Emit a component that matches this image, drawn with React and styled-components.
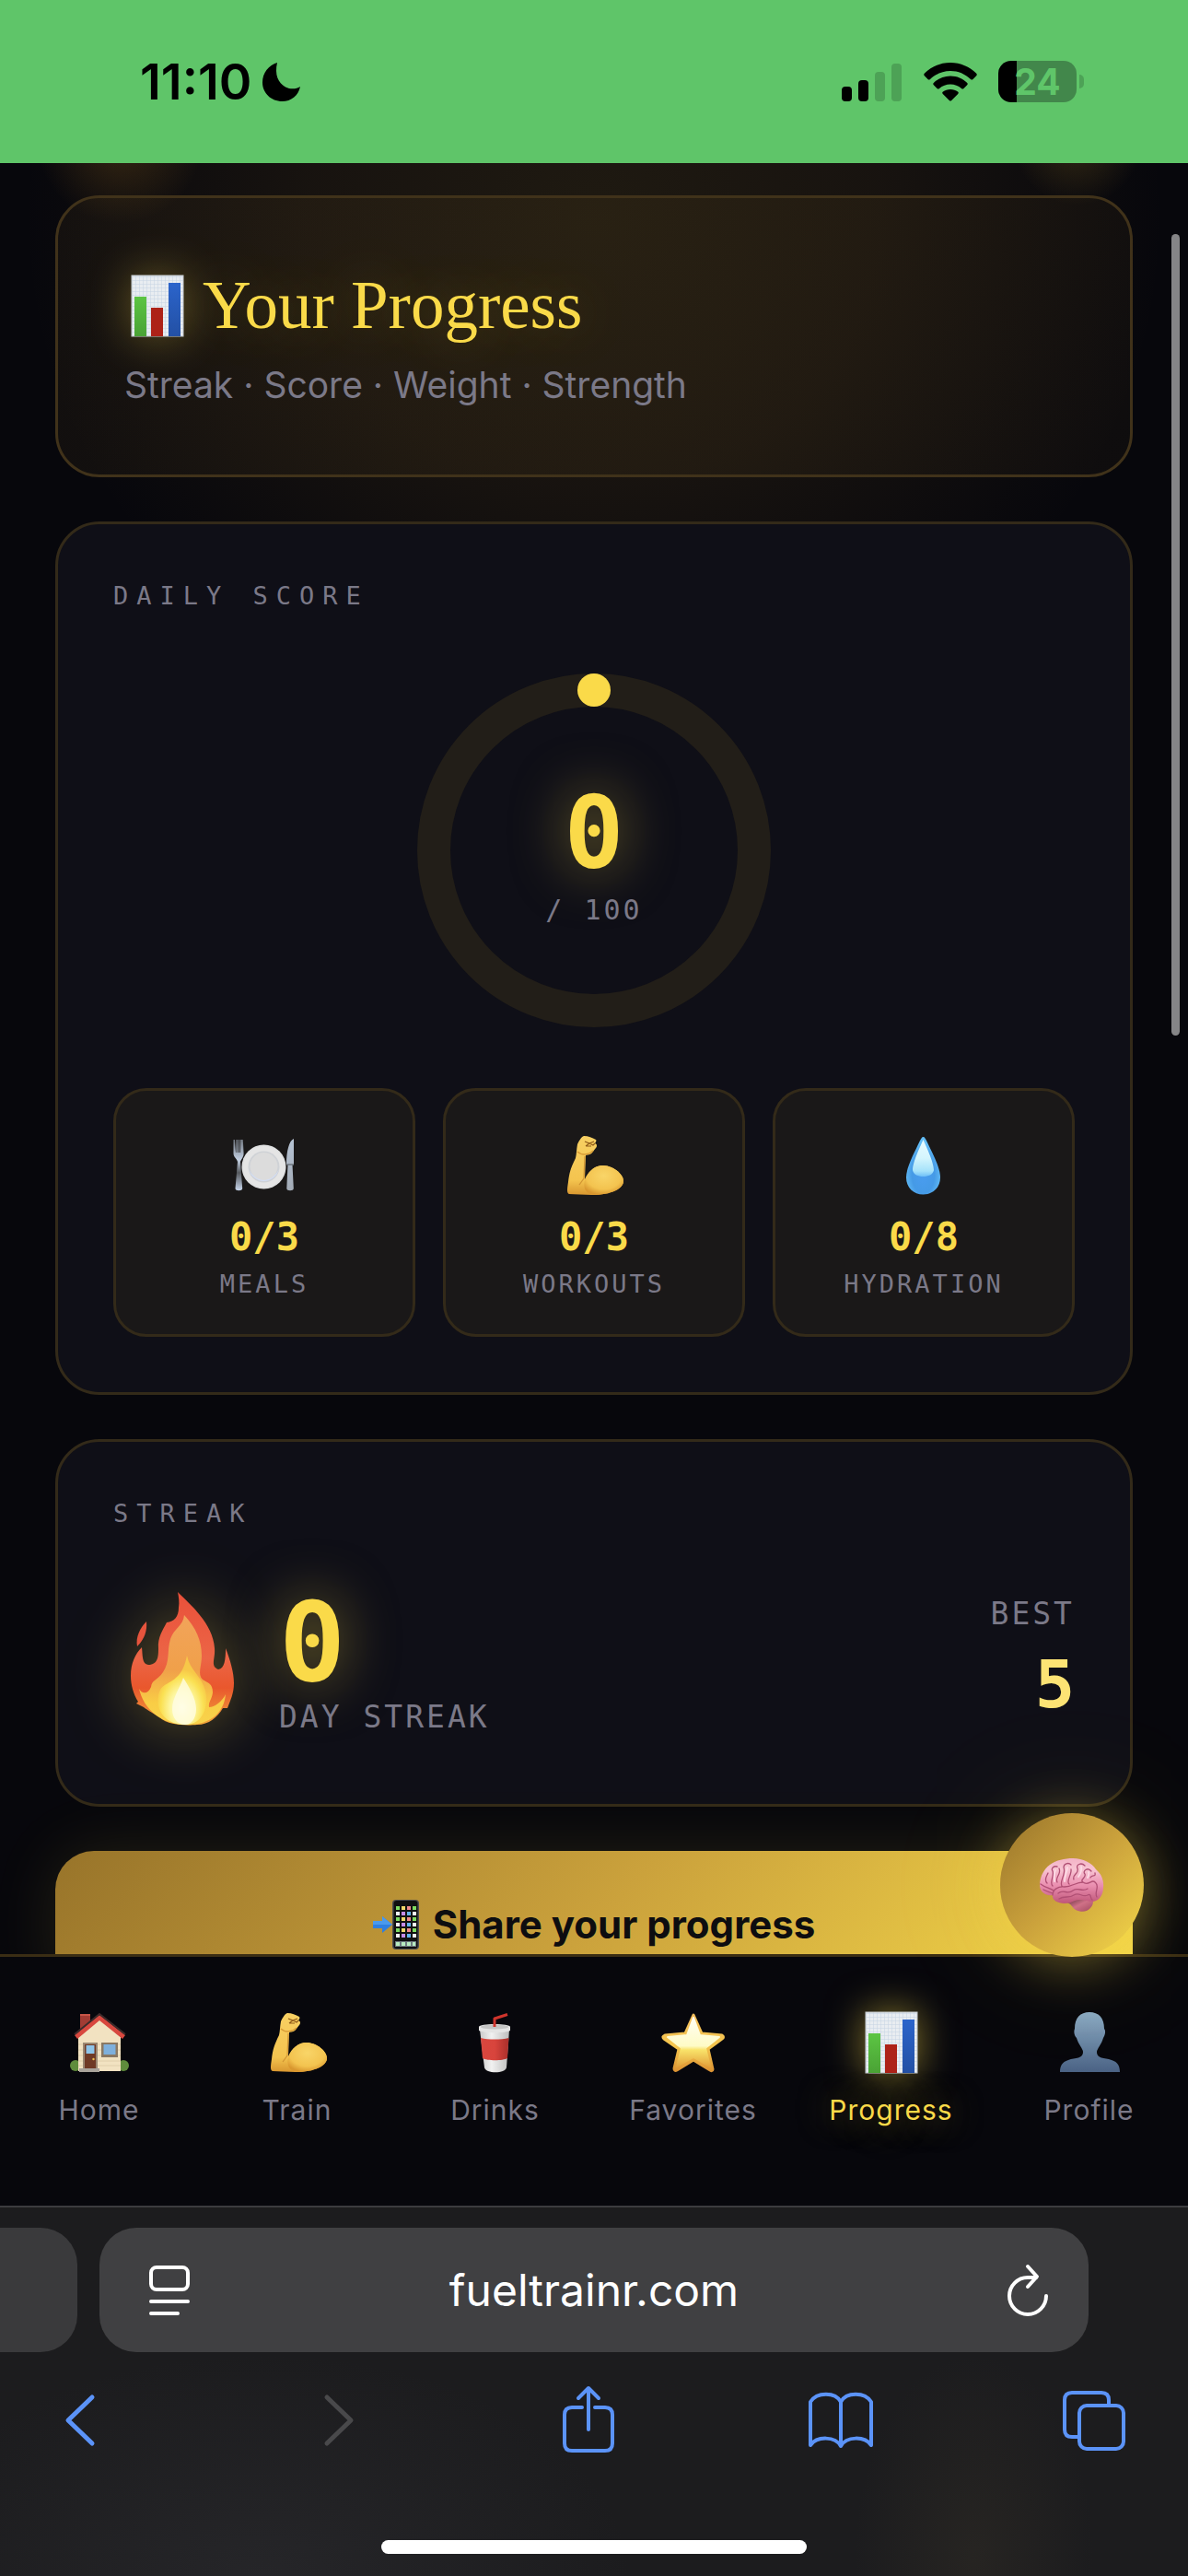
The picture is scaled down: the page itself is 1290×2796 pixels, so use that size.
import React from 'react';
import styled, { createGlobalStyle, ThemeProvider, css } from 'styled-components';

const theme = {
  colors: {
    page: '#07070c',
    card: '#0f0f17',
    tile: '#1a1818',
    border: '#332a19',
    gold: '#fada49',
    paleGold: '#fce374',
    muted: '#7b7988',
    track: '#221e18',
    status: '#5fc569',
    browser: '#1c1c1e',
    field: '#404042',
    link: '#5b93f8',
    disabled: '#49494b',
  },
  fonts: {
    sans: 'Inter, "Liberation Sans", sans-serif',
    serif: '"Liberation Serif", serif',
    mono: '"DejaVu Sans Mono", monospace',
  },
  gradients: {
    gold: 'linear-gradient(135deg, #98742a 0%, #cba23c 50%, #f5d94a 100%)',
  },
};

const GlobalStyle = createGlobalStyle`
  *, *::before, *::after {
    box-sizing: border-box;
  }

  body {
    margin: 0;
    background: ${theme.colors.page};
    font-family: ${theme.fonts.sans};
  }

  h1, h2, p {
    margin: 0;
    font-weight: 400;
  }

  button, input {
    font: inherit;
    border: none;
    padding: 0;
    background: none;
  }

  svg {
    display: block;
    flex: none;
  }
`;

const Screen = styled.div`
  display: flex;
  flex-direction: column;
  height: 100vh;
  overflow: hidden;
`;

/* ---------- status bar ---------- */

const StatusBar = styled.header`
  display: flex;
  justify-content: space-between;
  align-items: center;
  flex: none;
  height: 177px;
  padding: 0 121px 0 152px;
  background: ${props => props.theme.colors.status};
`;

const StatusGroup = styled.div`
  display: flex;
  align-items: center;
  gap: ${props => props.$gap};
`;

const Clock = styled.span`
  font-size: 54px;
  line-height: 60px;
  font-weight: 600;
  color: #000;
`;

const Battery = styled.div`
  display: flex;
  align-items: center;
  justify-content: center;
  position: relative;
  width: 85px;
  height: 45px;
  border-radius: 14px;
  background: linear-gradient(90deg, #000 20px, #42874b 20px);
  color: ${props => props.theme.colors.status};
  font-size: 39px;
  line-height: 45px;
  font-weight: 700;

  &::after {
    content: '';
    position: absolute;
    left: 88px;
    top: 15px;
    width: 5px;
    height: 15px;
    border-radius: 0 5px 5px 0;
    background: #4da256;
  }
`;

/* ---------- page ---------- */

const Page = styled.main`
  position: relative;
  display: flex;
  flex-direction: column;
  flex: 1;
  gap: 48px;
  min-height: 0;
  overflow: hidden;
  padding: 35px 60px 0;
  background:
    radial-gradient(circle 90px at 130px -24px, rgba(220, 150, 40, 0.2), transparent),
    radial-gradient(circle 70px at calc(100% - 120px) -24px, rgba(220, 170, 50, 0.18), transparent),
    radial-gradient(ellipse 620px 580px at 50% 60px, rgba(190, 150, 50, 0.13), rgba(190, 140, 50, 0.09) 50%, transparent),
    ${props => props.theme.colors.page};

  > * {
    flex: none;
  }
`;

const ScrollThumb = styled.div`
  position: absolute;
  top: 77px;
  right: 9px;
  width: 9px;
  height: 870px;
  border-radius: 5px;
  background: #858587;
`;

const Card = styled.section`
  padding: 60px;
  border: 3px solid ${props => props.theme.colors.border};
  border-radius: 48px;
  background: ${props => props.theme.colors.card};
`;

const HeroCard = styled(Card)`
  padding: 72px;
  border-color: #40321a;
  background: linear-gradient(135deg, rgba(200, 150, 60, 0.06), rgba(200, 150, 50, 0.06) 60%, rgba(200, 150, 60, 0.04));
`;

const Title = styled.h1`
  display: flex;
  align-items: center;
  gap: 13px;
  font-family: ${props => props.theme.fonts.serif};
  font-size: 73px;
  line-height: 90px;
  color: ${props => props.theme.colors.gold};
  text-shadow: 0 0 60px rgba(250, 218, 73, 0.3);

  svg {
    filter: drop-shadow(0 0 24px rgba(250, 218, 73, 0.35));
  }
`;

const Subtitle = styled.p`
  margin-top: 15px;
  font-size: 39px;
  line-height: 51px;
  color: ${props => props.theme.colors.muted};
`;

const MonoText = styled.p`
  font-family: ${props => props.theme.fonts.mono};
  font-size: ${props => props.$size || '27px'};
  line-height: ${props => props.$line || '36px'};
  letter-spacing: 3px;
  color: ${props => props.theme.colors.muted};
`;

const CardLabel = styled.h2`
  margin-bottom: 48px;
  font-family: ${props => props.theme.fonts.mono};
  font-size: 27px;
  line-height: 36px;
  letter-spacing: 9px;
  color: ${props => props.theme.colors.muted};
`;

const Figure = styled.p`
  font-family: ${props => props.theme.fonts.mono};
  font-weight: 700;
  font-size: ${props => props.$size};
  line-height: ${props => props.$line};
  color: ${props => (props.$pale ? props.theme.colors.paleGold : props.theme.colors.gold)};
  ${props => props.$glow && css`
    text-shadow: 0 0 60px rgba(250, 218, 73, 0.5);
  `}
`;

const Gauge = styled.div`
  display: grid;
  place-items: center;
  margin-bottom: 48px;

  > * {
    grid-area: 1 / 1;
  }
`;

const GaugeText = styled.div`
  display: flex;
  flex-direction: column;
  align-items: center;
  gap: 3px;
`;

const Tiles = styled.div`
  display: grid;
  grid-template-columns: repeat(3, 1fr);
  gap: 30px;
`;

const Tile = styled.div`
  display: flex;
  flex-direction: column;
  align-items: center;
  padding: 45px 12px 36px;
  border: 3px solid ${props => props.theme.colors.border};
  border-radius: 36px;
  background: ${props => props.theme.colors.tile};

  ${Figure} {
    margin: 15px 0 6px;
  }
`;

const StreakRow = styled.div`
  display: flex;
  align-items: center;
  gap: 30px;

  > svg {
    filter: drop-shadow(0 0 36px rgba(250, 218, 73, 0.35));
  }
`;

const Best = styled.div`
  display: flex;
  flex-direction: column;
  align-items: flex-end;
  gap: 7px;
  margin-left: auto;
`;

const ShareButton = styled.button`
  display: flex;
  align-items: center;
  justify-content: center;
  gap: 14px;
  padding: 51px 0;
  border-radius: 42px;
  background: ${props => props.theme.gradients.gold};
  box-shadow: 0 0 72px rgba(250, 218, 73, 0.12);
  font-size: 42px;
  line-height: 57px;
  font-weight: 700;
  color: #0d0d10;
`;

/* ---------- tab bar ---------- */

const TabBar = styled.nav`
  position: relative;
  display: grid;
  grid-template-columns: repeat(6, 1fr);
  flex: none;
  padding: 57px 0 86px;
  border-top: 3px solid #3a2d14;
  background: ${props => props.theme.colors.page};
`;

const Tab = styled.a`
  display: flex;
  flex-direction: column;
  align-items: center;
  gap: 19px;
  font-size: 30px;
  line-height: 36px;
  letter-spacing: 1px;
  text-decoration: none;
  color: ${props => (props.$active ? props.theme.colors.gold : props.theme.colors.muted)};

  ${props => props.$active && css`
    text-shadow: 0 0 36px rgba(250, 218, 73, 0.5);

    svg {
      filter: drop-shadow(0 0 21px rgba(250, 218, 73, 0.55));
    }
  `}
`;

// Floats over the seam between the page and the tab bar
const CoachButton = styled.button`
  position: absolute;
  top: -156px;
  right: 48px;
  display: grid;
  place-items: center;
  width: 156px;
  height: 156px;
  border-radius: 50%;
  background: ${props => props.theme.gradients.gold};
  box-shadow: 0 6px 60px rgba(250, 218, 73, 0.4), 0 0 150px rgba(250, 218, 73, 0.12);
`;

/* ---------- browser chrome ---------- */

const BrowserBar = styled.footer`
  display: flex;
  flex-direction: column;
  flex: none;
  padding: 22px 0 24px;
  border-top: 2px solid #3c3c3f;
  background:
    radial-gradient(ellipse 130px 220px at 82% 95%, rgba(80, 70, 50, 0.2), transparent),
    radial-gradient(ellipse 400px 240px at 22% 100%, rgba(60, 60, 66, 0.3), transparent),
    ${props => props.theme.colors.browser};
`;

const AddressRow = styled.div`
  display: flex;
  gap: 24px;
  padding-right: 108px;
`;

const PreviousTab = styled.div`
  width: 84px;
  border-radius: 0 40px 40px 0;
  background: #3a3a3c;
`;

const AddressField = styled.div`
  display: flex;
  align-items: center;
  flex: 1;
  height: 135px;
  padding: 0 44px;
  border-radius: 40px;
  background: ${props => props.theme.colors.field};
`;

const AddressInput = styled.input`
  flex: 1;
  min-width: 0;
  text-align: center;
  font-size: 48px;
  line-height: 60px;
  color: #fff;
  outline: none;
`;

const Toolbar = styled.div`
  display: flex;
  justify-content: space-between;
  padding: 36px 54px 0 39px;
`;

const IconButton = styled.button`
  display: grid;
  place-items: center;
  min-width: ${props => props.$width || '54px'};
  color: ${props => props.$color || props.theme.colors.link};

  &:disabled {
    color: ${props => props.theme.colors.disabled};
  }
`;

const HomeIndicator = styled.div`
  align-self: center;
  width: 462px;
  height: 15px;
  margin-top: 90px;
  border-radius: 8px;
  background: #fff;
`;

/* ---------- drawings ---------- */

const MoonIcon = () => (
  <svg width="42" height="42" viewBox="0 0 42 42" aria-hidden="true">
    <path d="M16 0C13 13 17 22 25 26.500C31 29.500 37 28.500 41 26C39 36 31 42 21.500 42C9.500 42 0 33 0 21.500C0 11 7 2.500 16 0Z" fill="#000" />
  </svg>
);

const SignalIcon = () => (
  <svg width="66" height="42" viewBox="0 0 66 42" aria-hidden="true">
    <rect x="0" y="26" width="11" height="16" rx="4" />
    <rect x="18" y="19" width="11" height="23" rx="4" />
    <rect x="36" y="10" width="11" height="32" rx="4" fill="#4da256" />
    <rect x="54" y="1" width="11" height="41" rx="4" fill="#4da256" />
  </svg>
);

const WifiIcon = () => (
  <svg width="58" height="42" viewBox="0 0 58 42" aria-hidden="true">
    <path d="M29 0C40 0 50 4.500 57 11.500C58 12.500 58 13.300 57.200 14.200L53.500 18C52.700 18.800 51.800 18.800 51 18C45 12.300 37.500 9 29 9C20.500 9 13 12.300 7 18C6.200 18.800 5.300 18.800 4.500 18L0.800 14.200C0 13.300 0 12.500 1 11.500C8 4.500 18 0 29 0Z" />
    <path d="M29 14.500C36 14.500 42.500 17.300 47 21.700C48 22.600 48 23.300 47.200 24.200L43.500 28C42.600 28.800 41.800 28.800 41 28C37.700 25 33.500 23.500 29 23.500C24.500 23.500 20.300 25 17 28C16.200 28.800 15.400 28.800 14.500 28L10.800 24.200C10 23.300 10 22.600 11 21.700C15.500 17.300 22 14.500 29 14.500Z" />
    <path d="M29 29C32 29 35 30 37 31.600C38 32.400 38 33.200 37.200 34L30.200 41C29.400 41.800 28.600 41.800 27.800 41L20.800 34C20 33.200 20 32.400 21 31.600C23 30 26 29 29 29Z" />
  </svg>
);

const ChartIcon = () => (
  <svg width="72" height="72" viewBox="0 0 72 72" aria-hidden="true">
    <defs>
      <pattern id="chartGrid" width="4" height="4" patternUnits="userSpaceOnUse">
        <rect width="4" height="4" fill="#e9edf1" />
        <path d="M0 0H4M0 0V4" stroke="#c6d4e3" strokeWidth="1" />
      </pattern>
      <linearGradient id="chartGreen" x1="0" y1="0" x2="0" y2="1">
        <stop offset="0" stopColor="#5cc543" />
        <stop offset="1" stopColor="#4aa235" />
      </linearGradient>
      <linearGradient id="chartBlue" x1="0" y1="0" x2="0" y2="1">
        <stop offset="0" stopColor="#2b64cb" />
        <stop offset="1" stopColor="#2350a4" />
      </linearGradient>
    </defs>
    <rect x="8" y="3" width="56" height="66" fill="url(#chartGrid)" stroke="#c4c9ce" />
    <rect x="11" y="26" width="13" height="43" fill="url(#chartGreen)" />
    <rect x="29" y="38" width="13" height="31" fill="#ad2218" />
    <rect x="48" y="11" width="13" height="58" fill="url(#chartBlue)" />
  </svg>
);

const PlateIcon = () => (
  <svg width="72" height="72" viewBox="0 0 72 72" aria-hidden="true">
    <defs>
      <linearGradient id="cutlery" x1="0" y1="0" x2="0" y2="1">
        <stop offset="0" stopColor="#6f757e" />
        <stop offset="0.4" stopColor="#c3d0e2" />
        <stop offset="0.65" stopColor="#55585d" />
        <stop offset="1" stopColor="#c8d6ec" />
      </linearGradient>
      <linearGradient id="knife" x1="0" y1="0" x2="0" y2="1">
        <stop offset="0" stopColor="#b6c3d4" />
        <stop offset="1" stopColor="#a3abb6" />
      </linearGradient>
    </defs>
    <path d="M2.500 8H4L5 22H5.500V8H7V22H7.800V8H9.200V22H10V8H11.500L12.800 8L13.600 23C13.600 27 11 29 10 32L12.200 61C12.200 64 4.500 64 4.500 61L7 32C6 28 2.500 27 2.500 23Z" fill="url(#cutlery)" />
    <path d="M68 7C63 9 60 20 60 35H61.500L60.300 61C60.300 64 67.800 64 67.800 61L66.500 35H68Z" fill="url(#knife)" />
    <path d="M60 35H68" stroke="#6d747d" strokeWidth="1.500" />
    <circle cx="35.500" cy="37.500" r="24" fill="#dfe0e1" />
    <circle cx="35.500" cy="37.500" r="22.500" fill="#e5e5e5" />
    <circle cx="35.500" cy="37.500" r="17" fill="#cfd2d6" />
    <path d="M19 40A17 17 0 0 0 52 40A18 18 0 0 1 19 40Z" fill="#d3def5" />
    <circle cx="35.500" cy="37" r="15" fill="#dcdcdc" />
  </svg>
);

const ArmIcon = () => (
  <svg width="72" height="72" viewBox="0 0 72 72" aria-hidden="true">
    <defs>
      <linearGradient id="armSkin" x1="0" y1="0" x2="0" y2="1">
        <stop offset="0" stopColor="#f8d063" />
        <stop offset="0.75" stopColor="#f4c44f" />
        <stop offset="1" stopColor="#d8962f" />
      </linearGradient>
      <radialGradient id="armMuscle" cx="0.5" cy="0.35" r="0.65">
        <stop offset="0" stopColor="#f9d568" />
        <stop offset="0.7" stopColor="#f3c34f" />
        <stop offset="1" stopColor="#d9972f" />
      </radialGradient>
    </defs>
    <path d="M25 4C30 4 34 6 38 8C39 9 38 11 37 12C40 13 39 16 38 17L34 22C32 25 29 24 27 25L26 51C30 42 37 36 46 36C56 36 68 45 68 53C68 61 55 68 34 68C24 68 16 67 9 67C6 66 7 61 8 54C9 44 11 38 16 28C17 24 17 18 18 13C20 9 22 5 25 4Z" fill="url(#armSkin)" />
    <path d="M26 52C30 42 37 36 46 36C56 36 68 45 68 53C68 61 55 68 34 68C27 66 24 60 26 52Z" fill="url(#armMuscle)" />
    <path d="M26 26L25 50L20 57" fill="none" stroke="#c88a2d" strokeWidth="1.200" opacity="0.8" />
    <path d="M26 10L31 12L36 10M27 15L31 12L35 14L37 12M28 15H33" fill="none" stroke="#8f5a18" strokeWidth="1.200" />
    <path d="M18 21C22 25 30 25 35 20" fill="none" stroke="#d89b35" strokeWidth="1.500" />
  </svg>
);

const DropIcon = () => (
  <svg width="72" height="72" viewBox="0 0 72 72" aria-hidden="true">
    <defs>
      <radialGradient id="dropBody" cx="0.5" cy="0.65" r="0.55">
        <stop offset="0" stopColor="#4a9df0" />
        <stop offset="0.6" stopColor="#459ae6" />
        <stop offset="1" stopColor="#63bdf6" />
      </radialGradient>
      <linearGradient id="dropShine" x1="0" y1="0" x2="0" y2="1">
        <stop offset="0" stopColor="#e8fbff" />
        <stop offset="0.5" stopColor="#d4f5fd" />
        <stop offset="0.85" stopColor="#a5e2fa" />
        <stop offset="1" stopColor="#6fc0f7" />
      </linearGradient>
    </defs>
    <path d="M35.500 5C37 5 38 7 39.500 10C45 22 54 38 54 49C54 60 46 67.500 35.500 67.500C25 67.500 17 60 17 49C17 38 26 22 31.500 10C33 7 34 5 35.500 5Z" fill="url(#dropBody)" />
    <path d="M35.500 8C38 14 47 32 47 41C46 46 41 48 35.500 48C30 48 25 46 24 41C24 32 33 14 35.500 8Z" fill="url(#dropShine)" />
  </svg>
);

const FlameIcon = () => (
  <svg width="150" height="189" viewBox="0 0 150 189" aria-hidden="true">
    <defs>
      <linearGradient id="flameOuter" x1="0" y1="0" x2="0" y2="1">
        <stop offset="0" stopColor="#e9503a" />
        <stop offset="0.5" stopColor="#ec6546" />
        <stop offset="0.72" stopColor="#e9572d" />
        <stop offset="1" stopColor="#f2a73b" />
      </linearGradient>
      <linearGradient id="flameMid" x1="0" y1="0" x2="0" y2="1">
        <stop offset="0" stopColor="#f2a45a" />
        <stop offset="0.5" stopColor="#f0a04a" />
        <stop offset="0.8" stopColor="#f9cd45" />
        <stop offset="1" stopColor="#f8d34c" />
      </linearGradient>
      <radialGradient id="flameCore" cx="0.5" cy="0.75" r="0.55">
        <stop offset="0" stopColor="#fffef2" />
        <stop offset="0.45" stopColor="#fdf6a0" />
        <stop offset="0.8" stopColor="#fae052" />
        <stop offset="1" stopColor="#f7c848" />
      </radialGradient>
    </defs>
    <path d="M70 19C84 33 108 53 110 80C111 92 105 99 114 103C121 102 122 92 122 80C127 93 131 106 131 118C131 129 127 137 124 145L119 145C113 155 104 163 91 163C80 164 60 164 50 155C42 150 37 147 33 144L25 140L27 138C22 130 19 120 19 110C19 96 24 86 31 79C32 88 31 97 38 98C49 98 49 88 49 80C48 68 54 60 58 52C66 51 71 46 71 36C72 30 71 24 70 19Z" fill="url(#flameOuter)" />
    <path d="M36 51C37 61 34 70 26 78C24 68 29 58 36 51Z" fill="#e6543d" />
    <path d="M77 44C90 58 96 72 96 88C96 100 91 108 97 114C103 118 108 118 108 128C107 136 103 138 104 144C110 144 118 138 122 130C120 150 106 163 80 163C52 163 33 146 28 124C31 130 38 130 41 122C42 114 47 116 54 106C62 94 58 84 62 70C66 58 76 56 77 44Z" fill="url(#flameMid)" />
    <path d="M80 88C83 104 96 110 100 126C104 142 98 163 78 163C57 163 46 148 49 132C51 118 60 120 68 112C75 106 78 98 80 88Z" fill="url(#flameCore)" />
    <path d="M76 112C82 122 90 134 90 146C90 157 84 163 78 163C70 163 64 156 64 146C64 134 72 124 76 112Z" fill="#fffde2" opacity="0.8" />
  </svg>
);

const appColors = ['#7ddb62', '#62b4ee', '#f0d76a', '#f1f1f3', '#ef8b8b', '#c58be8'];

const PhoneIcon = () => (
  <svg width="51" height="54" viewBox="0 0 51 54" aria-hidden="true">
    <rect x="21" y="0" width="29" height="54" rx="4" fill="#4c4c4e" />
    <rect x="22.500" y="1" width="26" height="52" rx="3" fill="#111112" />
    {[0, 1, 2, 3, 4, 5].map(row =>
      [0, 1, 2, 3].map(col => (
        <rect
          key={`${row}-${col}`}
          x={25 + col * 6}
          y={7 + row * 6}
          width="4"
          height="4"
          fill={appColors[(row * 3 + col * 2) % appColors.length]}
        />
      ))
    )}
    <rect x="24" y="45" width="23" height="6" fill="#6f7a80" />
    <path d="M25 46H29V50H25ZM31 46H35V50H31ZM37 46H41V50H37ZM43 46H46V50H43Z" fill="#b8ecc0" />
    <path d="M0 23H10V18L21 27L10 36V31H0Z" fill="#2f7fe0" />
    <path d="M0 23H10V18L21 27H0Z" fill="#4a9aed" />
  </svg>
);

const BrainIcon = () => (
  <svg width="72" height="60" viewBox="0 0 72 60" aria-hidden="true">
    <defs>
      <linearGradient id="brainBody" x1="0" y1="0" x2="0" y2="1">
        <stop offset="0" stopColor="#f3b3c6" />
        <stop offset="0.25" stopColor="#f8c4d3" />
        <stop offset="0.6" stopColor="#ea8fb0" />
        <stop offset="1" stopColor="#bf5578" />
      </linearGradient>
      <linearGradient id="brainStem" x1="0" y1="0" x2="1" y2="1">
        <stop offset="0" stopColor="#5d2f38" />
        <stop offset="0.5" stopColor="#cf7187" />
        <stop offset="1" stopColor="#a14a60" />
      </linearGradient>
    </defs>
    <path d="M30 49C36 50 36 55 40 57C46 60 53 59 56 55C59 52 59 49 59 46L40 44Z" fill="url(#brainStem)" />
    <path d="M1 30C1 22 5 13 12 8C19 3 28 1 37 1C48 1 58 6 62 13C68 18 71 25 70 33C70 40 66 47 59 48C53 48 50 46 44 46C38 46 36 50 28 50C20 50 14 46 15 41C8 42 1 38 1 30Z" fill="url(#brainBody)" />
    <path d="M15 41C15 35 21 31 28 32C36 32 40 27 48 27M2 29C7 33 12 33 16 36M5 35C9 37 12 38 15 39M9 28C5 24 9 20 10 17M15 31C11 27 17 21 15 15C13 12 16 9 20 10M20 27C17 22 25 18 22 12M25 31C22 26 30 18 27 11C27 7 32 5 35 8M33 29C29 26 36 19 35 13M38 24C36 18 44 18 42 12C40 8 46 5 50 9M48 27C44 24 52 22 50 18C47 15 53 10 57 15M48 27C54 32 58 22 62 28C66 32 60 38 63 43M56 22C58 18 62 22 61 17M21 39C27 34 31 41 37 36C43 32 47 38 53 34M22 45C28 41 33 45 38 41C44 37 47 44 53 41C57 38 56 46 58 46" fill="none" stroke="#b04f74" strokeWidth="1.300" strokeLinecap="round" />
    <path d="M18 14C16 19 17 22 17 26M31 11C30 17 28 21 28 26M46 10C47 14 45 18 43 21M54 16C55 18 54 20 53 22" fill="none" stroke="#fcdce6" strokeWidth="1.800" strokeLinecap="round" />
  </svg>
);

const HouseIcon = () => (
  <svg width="72" height="72" viewBox="0 0 72 72" aria-hidden="true">
    <rect x="15" y="6" width="11" height="20" fill="#a23c34" />
    <path d="M15 6H26" stroke="#c75548" strokeWidth="2" />
    <circle cx="10" cy="61" r="6" fill="#5f8c3c" />
    <circle cx="62" cy="61" r="6" fill="#5f8c3c" />
    <path d="M13 30L36 10L59 30V67H13Z" fill="#f2e2c1" />
    <path d="M13 38H59M13 44H59M13 50H59M13 56H59M13 61H59" stroke="#dccba6" strokeWidth="0.800" />
    <path d="M36 6L64 28L61 32L36 12L12 32L9 28Z" fill="#d8483f" />
    <path d="M9 27L36 5L64 27" fill="none" stroke="#3c2b2b" strokeWidth="2" />
    <rect x="18" y="36" width="16" height="30" fill="#9b8873" />
    <rect x="20" y="38" width="12" height="26" fill="#6f3925" />
    <rect x="21.500" y="39" width="9" height="9" fill="#8fc4e8" />
    <circle cx="29.500" cy="54" r="1.200" fill="#eec04e" />
    <rect x="38" y="36" width="18" height="16" fill="#8b7963" />
    <rect x="40.500" y="38" width="13" height="11" fill="#7fb0dc" />
    <rect x="14" y="64" width="22" height="4" fill="#a9a39b" />
  </svg>
);

const CupIcon = () => (
  <svg width="72" height="72" viewBox="0 0 72 72" aria-hidden="true">
    <defs>
      <linearGradient id="cupWhite" x1="0" y1="0" x2="1" y2="0">
        <stop offset="0" stopColor="#c9c9c9" />
        <stop offset="0.4" stopColor="#f1f1f1" />
        <stop offset="1" stopColor="#bdbdbd" />
      </linearGradient>
      <linearGradient id="cupRed" x1="0" y1="0" x2="1" y2="0">
        <stop offset="0" stopColor="#d9473f" />
        <stop offset="0.5" stopColor="#d8443c" />
        <stop offset="1" stopColor="#a92f2b" />
      </linearGradient>
    </defs>
    <path d="M19 22H51L48 63C47 70 25 70 24 63Z" fill="url(#cupWhite)" />
    <path d="M20 31C28 33 42 33 50.500 31L49 53C44 56 27 56 22 53Z" fill="url(#cupRed)" />
    <path d="M18 19C18 15 52 15 52 19V23C46 26 24 26 18 23Z" fill="#e4e4e4" />
    <ellipse cx="35" cy="19" rx="15" ry="2.500" fill="#c4c4c4" />
    <path d="M35 19V10L49 5.500" fill="none" stroke="#cf342c" strokeWidth="3" strokeLinejoin="round" />
  </svg>
);

const StarIcon = () => (
  <svg width="72" height="72" viewBox="0 0 72 72" aria-hidden="true">
    <defs>
      <linearGradient id="starEdge" x1="0" y1="0" x2="0" y2="1">
        <stop offset="0" stopColor="#f3bd5b" />
        <stop offset="0.55" stopColor="#f4c54d" />
        <stop offset="1" stopColor="#dd9434" />
      </linearGradient>
      <linearGradient id="starFace" x1="0" y1="0" x2="0" y2="1">
        <stop offset="0" stopColor="#fffef4" />
        <stop offset="0.58" stopColor="#fefbc6" />
        <stop offset="0.66" stopColor="#f9e36a" />
        <stop offset="1" stopColor="#e3a23c" />
      </linearGradient>
    </defs>
    <path d="M36 6L45 26L67 28C69 29 69 31 67 32L52 43L57 65C57 67 55 67 54 66L36 55L18 66C16 67 15 66 15 64L20 43L4 32C2 30 3 29 5 28L27 26Z" fill="url(#starEdge)" stroke="url(#starEdge)" strokeWidth="3" strokeLinejoin="round" />
    <path d="M36 9L43 28L64 30L49 42L54 62L36 52L18 62L23 42L8 30L29 28Z" fill="url(#starFace)" stroke="url(#starFace)" strokeWidth="2" strokeLinejoin="round" />
  </svg>
);

const PersonIcon = () => (
  <svg width="72" height="72" viewBox="0 0 72 72" aria-hidden="true">
    <defs>
      <linearGradient id="person" x1="0" y1="0" x2="0" y2="1">
        <stop offset="0" stopColor="#8aaac4" />
        <stop offset="1" stopColor="#4a6284" />
      </linearGradient>
    </defs>
    <path d="M36 3C46 3 52 9 52 21C54 23 53 28 51 31C49 38 44 43 44 46C44 54 52 52 60 55C67 57 69 62 69 68H4C4 62 6 57 13 55C21 52 29 54 29 46C29 43 24 38 22 31C19 28 19 23 20 21C20 9 26 3 36 3Z" fill="url(#person)" />
  </svg>
);

const strokeProps = {
  fill: 'none',
  stroke: 'currentColor',
  strokeWidth: 4,
  strokeLinecap: 'round',
  strokeLinejoin: 'round',
  'aria-hidden': true,
};

const ReaderIcon = () => (
  <svg width="54" height="60" viewBox="0 0 54 60" {...strokeProps}>
    <rect x="12" y="5" width="40" height="24" rx="6" />
    <path d="M12 42H52M12 55H41" />
  </svg>
);

const ReloadIcon = () => (
  <svg width="54" height="60" viewBox="0 0 54 60" {...strokeProps}>
    <path d="M52 36A20 20 0 1 1 32 16H41" />
    <path d="M32 4L42 15L32 26" />
  </svg>
);

const BackIcon = () => (
  <svg width="96" height="78" viewBox="0 0 96 78" {...strokeProps} strokeWidth="5">
    <path d="M61 13L35 38L61 63" />
  </svg>
);

const ForwardIcon = () => (
  <svg width="96" height="78" viewBox="0 0 96 78" {...strokeProps} strokeWidth="5">
    <path d="M41 13L67 38L41 63" />
  </svg>
);

const ShareIcon = () => (
  <svg width="96" height="78" viewBox="0 0 96 78" {...strokeProps}>
    <path d="M42 24H31Q23 24 23 32V63Q23 71 31 71H67Q75 71 75 63V32Q75 24 67 24H56" />
    <path d="M49 48V3M38 14L49 3L60 14" />
  </svg>
);

const BookIcon = () => (
  <svg width="96" height="78" viewBox="0 0 96 78" {...strokeProps}>
    <path d="M48 18C42 7 22 7 15 18V65C22 55 42 55 48 66C54 55 74 55 81 65V18C74 7 54 7 48 18V66" />
  </svg>
);

const TabsIcon = () => (
  <svg width="96" height="78" viewBox="0 0 96 78" {...strokeProps}>
    <path d="M31 56H24Q16 56 16 48V16Q16 8 24 8H56Q64 8 64 16V21" />
    <rect x="32" y="22" width="48" height="47" rx="8" />
  </svg>
);

/* ---------- data ---------- */

const tiles = [
  { label: 'MEALS', value: '0/3', Icon: PlateIcon },
  { label: 'WORKOUTS', value: '0/3', Icon: ArmIcon },
  { label: 'HYDRATION', value: '0/8', Icon: DropIcon },
];

const tabs = [
  { label: 'Home', Icon: HouseIcon },
  { label: 'Train', Icon: ArmIcon },
  { label: 'Drinks', Icon: CupIcon },
  { label: 'Favorites', Icon: StarIcon },
  { label: 'Progress', Icon: ChartIcon, active: true },
  { label: 'Profile', Icon: PersonIcon },
];

const ScoreGauge = ({ score, max }) => {
  const radius = 174;
  const length = 2 * Math.PI * radius;
  return (
    <Gauge>
      <svg width="420" height="420" viewBox="0 0 420 420" aria-hidden="true">
        <circle cx="210" cy="210" r={radius} fill="none" stroke={theme.colors.track} strokeWidth="36" />
        {/* the tiny extra length keeps the round cap visible at zero */}
        <circle
          cx="210"
          cy="210"
          r={radius}
          fill="none"
          stroke={theme.colors.gold}
          strokeWidth="36"
          strokeLinecap="round"
          strokeDasharray={`${(score / max) * length + 0.01} ${length}`}
          transform="rotate(-90 210 210)"
        />
      </svg>
      <GaugeText>
        <Figure $size="108px" $line="126px" $glow>{score}</Figure>
        <MonoText $size="30px">/ {max}</MonoText>
      </GaugeText>
    </Gauge>
  );
};

const App = () => (
  <ThemeProvider theme={theme}>
    <GlobalStyle />
    <Screen>
      <StatusBar>
        <StatusGroup $gap="12px">
          <Clock>11:10</Clock>
          <MoonIcon />
        </StatusGroup>
        <StatusGroup $gap="23px">
          <SignalIcon />
          <WifiIcon />
          <Battery>24</Battery>
        </StatusGroup>
      </StatusBar>

      <Page>
        <HeroCard>
          <Title>
            <ChartIcon />
            Your Progress
          </Title>
          <Subtitle>Streak · Score · Weight · Strength</Subtitle>
        </HeroCard>

        <Card>
          <CardLabel>DAILY SCORE</CardLabel>
          <ScoreGauge score={0} max={100} />
          <Tiles>
            {tiles.map(({ label, value, Icon }) => (
              <Tile key={label}>
                <Icon />
                <Figure $size="42px" $line="54px">{value}</Figure>
                <MonoText>{label}</MonoText>
              </Tile>
            ))}
          </Tiles>
        </Card>

        <Card>
          <CardLabel>STREAK</CardLabel>
          <StreakRow>
            <FlameIcon />
            <div>
              <Figure $size="120px" $line="120px" $glow>0</Figure>
              <MonoText $size="33px" $line="42px">DAY STREAK</MonoText>
            </div>
            <Best>
              <MonoText $size="33px" $line="42px">BEST</MonoText>
              <Figure $size="72px" $line="96px" $pale>5</Figure>
            </Best>
          </StreakRow>
        </Card>

        <ShareButton type="button">
          <PhoneIcon />
          Share your progress
        </ShareButton>
        <ScrollThumb />
      </Page>

      <TabBar>
        {tabs.map(({ label, Icon, active }) => (
          <Tab key={label} href={`#${label.toLowerCase()}`} $active={active}>
            <Icon />
            {label}
          </Tab>
        ))}
        <CoachButton type="button" aria-label="Coach">
          <BrainIcon />
        </CoachButton>
      </TabBar>

      <BrowserBar>
        <AddressRow>
          <PreviousTab />
          <AddressField>
            <IconButton type="button" aria-label="Page menu" $color="#fff"><ReaderIcon /></IconButton>
            <AddressInput aria-label="Address" defaultValue="fueltrainr.com" />
            <IconButton type="button" aria-label="Reload" $color="#fff"><ReloadIcon /></IconButton>
          </AddressField>
        </AddressRow>
        <Toolbar>
          <IconButton type="button" aria-label="Back" $width="96px"><BackIcon /></IconButton>
          <IconButton type="button" aria-label="Forward" $width="96px" disabled><ForwardIcon /></IconButton>
          <IconButton type="button" aria-label="Share" $width="96px"><ShareIcon /></IconButton>
          <IconButton type="button" aria-label="Bookmarks" $width="96px"><BookIcon /></IconButton>
          <IconButton type="button" aria-label="Tabs" $width="96px"><TabsIcon /></IconButton>
        </Toolbar>
        <HomeIndicator />
      </BrowserBar>
    </Screen>
  </ThemeProvider>
);

export default App;
